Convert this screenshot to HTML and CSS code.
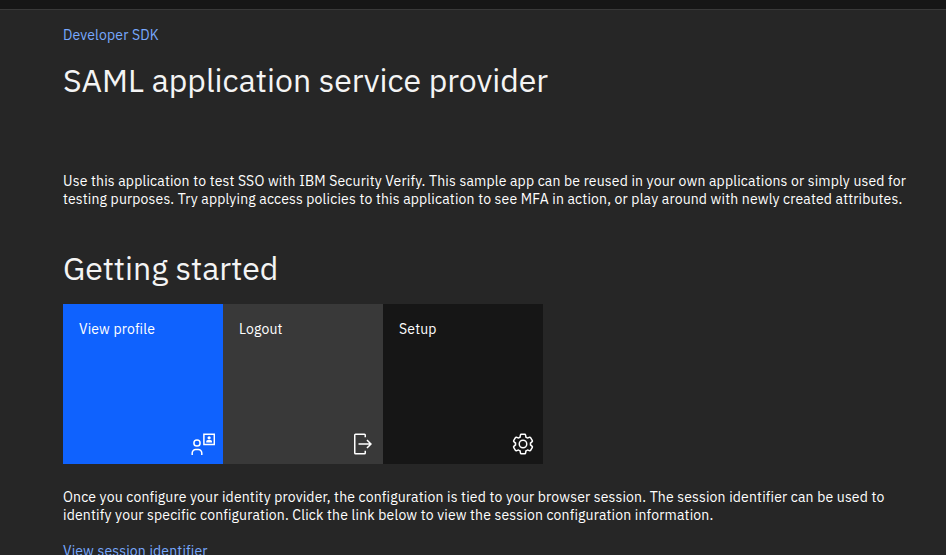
FILE: index.html
```html
<!DOCTYPE html>
<html lang="en">
<head>
<meta charset="utf-8">
<title>SAML application service provider</title>
<link rel="stylesheet" href="styles.css">
</head>
<body>
<header class="topbar"></header>
<main class="page">
  <a class="crumb" href="#">Developer SDK</a>
  <h1 class="title">SAML application service provider</h1>
  <p class="copy intro">Use this application to test SSO with IBM Security Verify. This sample app can be reused in your own applications or simply used for<br>testing purposes. Try applying access policies to this application to see MFA in action, or play around with newly created attributes.</p>
  <h2 class="title started">Getting started</h2>
  <nav class="tiles">
    <a class="tile profile" href="#"><span>View profile</span>
      <svg viewBox="0 0 24 24" fill="none" stroke="currentColor" stroke-width="1.5"><circle cx="6" cy="11" r="3.1"/><path d="M1.2 23v-2a3.5 3.5 0 0 1 3.5-3.5h2.6a3.5 3.5 0 0 1 3.5 3.5v2"/><path d="M12.9 2.2h10.4v10.4H12.9z"/><g fill="currentColor" stroke="none"><circle cx="18.1" cy="5.8" r="1.6"/><path d="M15.2 10.4V9.6a1.5 1.5 0 0 1 1.5-1.5h2.8a1.5 1.5 0 0 1 1.5 1.5v.8z"/></g></svg></a>
    <a class="tile logout" href="#"><span>Logout</span>
      <svg viewBox="0 0 32 32" fill="currentColor"><path d="M6 30h12a2 2 0 0 0 2-2v-3h-2v3H6V4h12v3h2V4a2 2 0 0 0-2-2H6a2 2 0 0 0-2 2v24a2 2 0 0 0 2 2z"/><path d="M20.586 20.586 24.172 17H10v-2h14.172l-3.586-3.586L22 10l6 6-6 6z"/></svg></a>
    <a class="tile setup" href="#"><span>Setup</span>
      <svg viewBox="0 0 32 32" fill="currentColor" fill-rule="evenodd"><path d="M27 16.76v-1.52l1.92-1.68A2 2 0 0 0 29.3 11l-2.36-4a2 2 0 0 0-1.73-1 2 2 0 0 0-.64.1l-2.43.82a11.35 11.35 0 0 0-1.31-.75l-.51-2.52a2 2 0 0 0-2-1.61h-4.68a2 2 0 0 0-2 1.61l-.51 2.52a11.48 11.48 0 0 0-1.32.75l-2.38-.86A2 2 0 0 0 6.79 6a2 2 0 0 0-1.73 1L2.7 11a2 2 0 0 0 .41 2.51L5 15.24v1.52l-1.89 1.68A2 2 0 0 0 2.7 21l2.36 4a2 2 0 0 0 1.73 1 2 2 0 0 0 .64-.1l2.43-.82a11.35 11.35 0 0 0 1.31.75l.51 2.52a2 2 0 0 0 2 1.61h4.72a2 2 0 0 0 2-1.61l.51-2.52a11.48 11.48 0 0 0 1.32-.75l2.42.82a2 2 0 0 0 .64.1 2 2 0 0 0 1.73-1l2.28-4a2 2 0 0 0-.41-2.51zM25.21 24l-3.43-1.16a8.86 8.86 0 0 1-2.71 1.57L18.36 28h-4.72l-.71-3.55a9.36 9.36 0 0 1-2.7-1.57L6.79 24l-2.36-4 2.72-2.4a8.9 8.9 0 0 1 0-3.13L4.43 12l2.36-4 3.43 1.16a8.86 8.86 0 0 1 2.71-1.57L13.64 4h4.72l.71 3.55a9.36 9.36 0 0 1 2.7 1.57L25.21 8l2.36 4-2.72 2.4a8.9 8.9 0 0 1 0 3.13L27.57 20z"/><path d="M16 22a6 6 0 1 1 6-6 5.94 5.94 0 0 1-6 6zm0-10a3.91 3.91 0 0 0-4 4 3.91 3.91 0 0 0 4 4 3.91 3.91 0 0 0 4-4 3.91 3.91 0 0 0-4-4z"/></svg></a>
  </nav>
  <p class="copy session">Once you configure your identity provider, the configuration is tied to your browser session. The session identifier can be used to<br>identify your specific configuration. Click the link below to view the session configuration information.</p>
  <a class="crumb view" href="#">View session identifier</a>
</main>
</body>
</html>
```
FILE: styles.css
```css
* { box-sizing: border-box; }
html, body { height: 100%; overflow: hidden; }
body { margin: 0; background: #262626; color: #f4f4f4; font: 14px/18px "IBM Plex Sans", Roboto, sans-serif; letter-spacing: .16px; }
a { text-decoration: none; color: inherit; }
.topbar { height: 10px; background: #161616; border-bottom: 1px solid #393939; }
.page { padding: 16px 0 0 63px; white-space: nowrap; }
.crumb { display: block; width: max-content; color: #78a9ff; }
.title { margin: 16px 0 0; width: max-content; font-weight: 400; font-size: 32px; line-height: 40px; letter-spacing: 0; }
.copy { margin: 0; color: #fff; }
.intro { margin-top: 72px; }
.started { margin-top: 40px; }
.tiles { display: flex; margin-top: 16px; }
.tile { display: flex; flex-direction: column; justify-content: space-between; width: 160px; height: 160px; padding: 16px 8px 8px 16px; color: #fff; }
.tile span { width: max-content; }
.tile svg { width: 24px; height: 24px; align-self: flex-end; }
.profile { background: #0f62fe; }
.logout { background: #393939; }
.setup { background: #161616; }
.session { margin-top: 24px; }
.view { margin-top: 18px; }
```
